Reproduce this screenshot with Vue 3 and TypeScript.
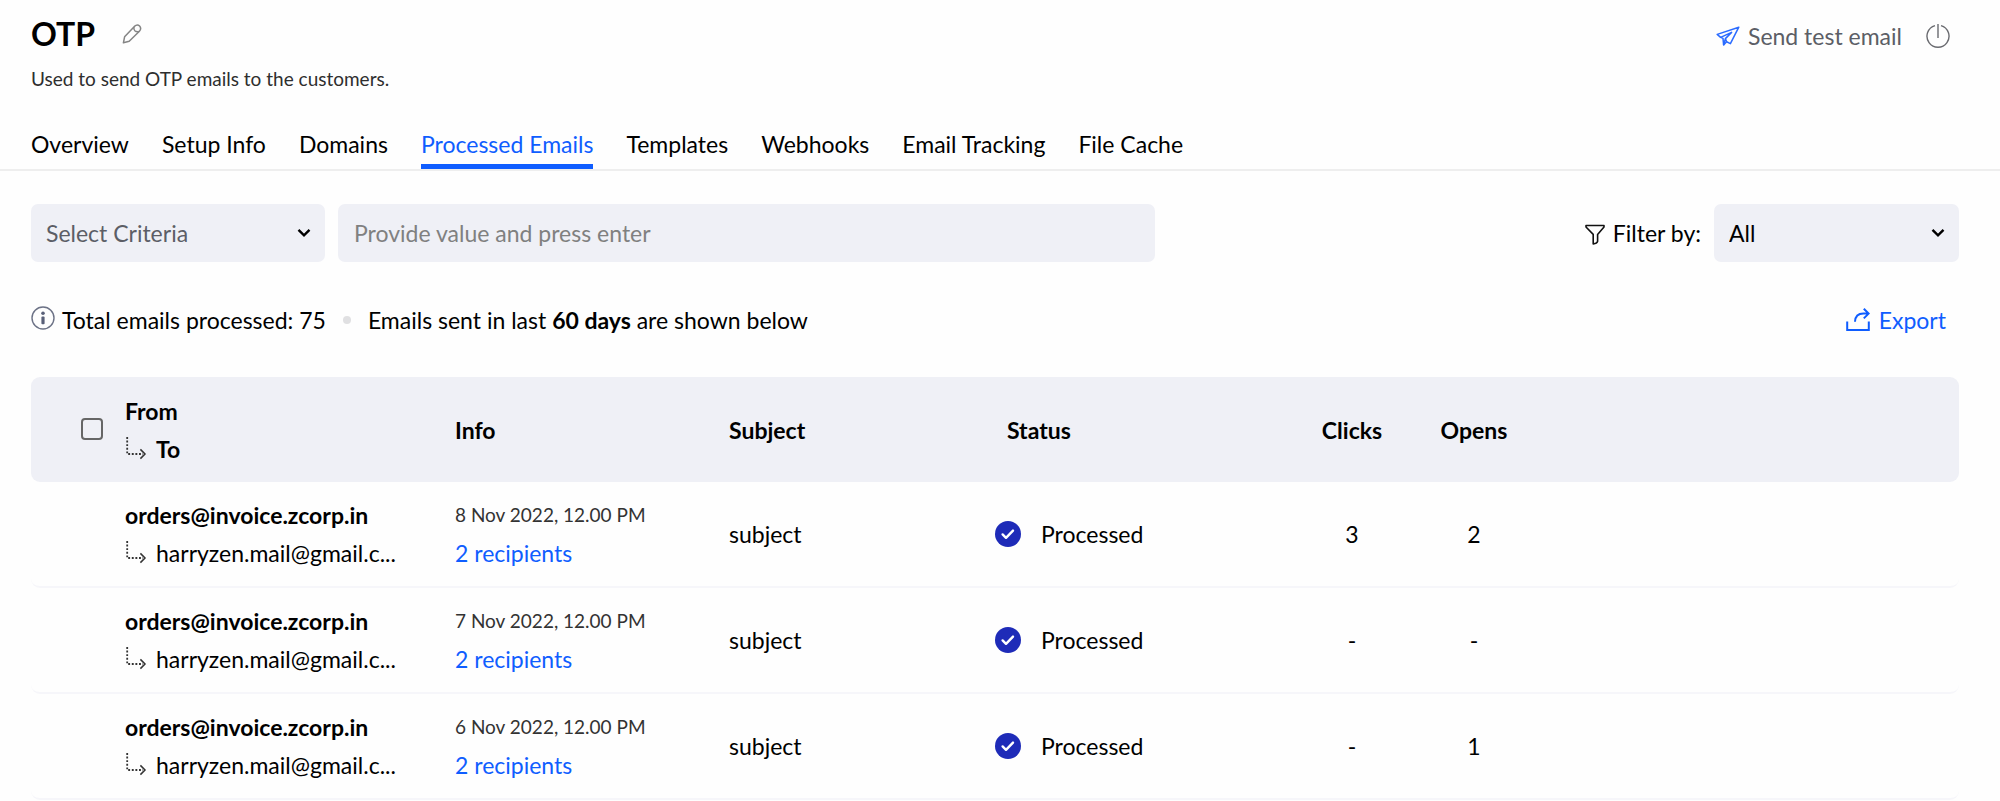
<script setup lang="ts">
import { ref } from 'vue'

interface MailRow {
  from: string
  to: string
  date: string
  recipients: string
  subject: string
  status: string
  clicks: string
  opens: string
}

const tabs: string[] = [
  'Overview',
  'Setup Info',
  'Domains',
  'Processed Emails',
  'Templates',
  'Webhooks',
  'Email Tracking',
  'File Cache',
]
const activeTab = ref('Processed Emails')
const criteria = ref('Select Criteria')
const query = ref('')
const filter = ref('All')
const allSelected = ref(false)

const makeRow = (date: string, clicks: string, opens: string): MailRow => ({
  from: 'orders@invoice.zcorp.in',
  to: 'harryzen.mail@gmail.c...',
  date,
  recipients: '2 recipients',
  subject: 'subject',
  status: 'Processed',
  clicks,
  opens,
})

const rows: MailRow[] = [
  makeRow('8 Nov 2022, 12.00 PM', '3', '2'),
  makeRow('7 Nov 2022, 12.00 PM', '-', '-'),
  makeRow('6 Nov 2022, 12.00 PM', '-', '1'),
]
</script>

<template>
  <main class="page">
    <header class="head">
      <div>
        <div class="title-row">
          <h1>OTP</h1>
          <button type="button" class="icon-btn" aria-label="Edit name">
            <svg viewBox="0 0 20 20" width="20" height="20" fill="none" stroke="#858585" stroke-width="1.5" stroke-linejoin="round">
              <path d="M1.4 18.8 L2.6 12.8 L12.4 2.4 Q15.2 0 17.6 2 Q19.8 4.4 17.4 7.2 L7.2 17.2 Z" />
              <path d="M12 3 Q11.4 5.4 12.8 6.8 Q14.4 8.2 17 7.6" />
            </svg>
          </button>
        </div>
        <p class="desc">Used to send OTP emails to the customers.</p>
      </div>
      <div class="actions">
        <button type="button" class="send">
          <svg viewBox="0 0 24 20" width="24" height="20" fill="none" stroke="#2a6bff" stroke-width="1.5" stroke-linejoin="round">
            <path d="M22.8 1.2 L1.2 8.4 L4.6 11.4 L7 12.4 L7.6 19 L10.6 15.8 L14.4 17.6 Z" />
            <path d="M4.6 11.4 L15.6 6.4 L9.4 12.6 L10.6 15.8 M9.4 12.6 L7.6 19" />
          </svg>
          Send test email
        </button>
        <button type="button" class="icon-btn" aria-label="Power">
          <svg viewBox="0 0 24 24" width="24" height="24" fill="none" stroke="#6a6b70" stroke-width="1.4">
            <path d="M9 1.6 A11 11 0 1 0 15 1.6 M12 0 V14" />
          </svg>
        </button>
      </div>
    </header>

    <nav class="tabs">
      <a v-for="tab in tabs" :key="tab" href="#" :class="{ active: tab === activeTab }" @click.prevent="activeTab = tab">{{ tab }}</a>
    </nav>

    <section class="filters">
      <div class="select criteria">
        <select v-model="criteria" aria-label="Criteria">
          <option>Select Criteria</option>
        </select>
        <svg class="chevron" viewBox="0 0 14 10" width="14" height="10" fill="none" stroke="#000" stroke-width="2.4"><path d="M1.5 1.8 L7 7.4 L12.5 1.8" /></svg>
      </div>
      <input v-model="query" class="search" type="text" aria-label="Search value" placeholder="Provide value and press enter" />
      <label class="filter-label" for="filter-by">
        <svg viewBox="0 -3 20 24" width="20" height="24" fill="none" stroke="#111" stroke-width="1.6" stroke-linejoin="round">
          <path d="M1 1.5 H19 V3 L12.6 10.4 V17.4 Q12 19.6 8.2 20 V10.4 L1 3 Z" />
        </svg>
        Filter by:
      </label>
      <div class="select by">
        <select id="filter-by" v-model="filter">
          <option>All</option>
        </select>
        <svg class="chevron" viewBox="0 0 14 10" width="14" height="10" fill="none" stroke="#000" stroke-width="2.4"><path d="M1.5 1.8 L7 7.4 L12.5 1.8" /></svg>
      </div>
    </section>

    <section class="summary">
      <svg viewBox="0 0 24 28" width="24" height="28" fill="none">
        <circle cx="12" cy="12" r="11" stroke="#6c7286" stroke-width="1.4" />
        <circle cx="12" cy="7.3" r="1.8" fill="#596078" />
        <rect x="10.4" y="10.4" width="3.2" height="7.8" rx="1" fill="#596078" />
      </svg>
      <span class="total">Total emails processed: 75</span>
      <i class="dot"></i>
      <span>Emails sent in last <b>60 days</b> are shown below</span>
      <button type="button" class="export">
        <svg viewBox="0 0 24 24" width="24" height="24" fill="none" stroke="#0f5dff" stroke-width="2">
          <path d="M1.2 13.6 V22 H22.8 V13.6" />
          <path d="M9 13.8 Q9.4 5.6 17.4 5.6 H22.4 M17.8 0.8 L22.6 5.6 L17.8 10.4" />
        </svg>
        Export
      </button>
    </section>

    <table>
      <colgroup>
        <col class="c-check" /><col class="c-from" /><col class="c-info" /><col class="c-subject" />
        <col class="c-status" /><col class="c-num" /><col class="c-num" /><col />
      </colgroup>
      <thead>
        <tr>
          <th class="check"><input v-model="allSelected" type="checkbox" aria-label="Select all emails" /></th>
          <th>
            <div class="line">From</div>
            <div class="line to">
              <svg class="branch" viewBox="0 0 22 24" width="22" height="24" fill="none" stroke="#333" stroke-width="1.8">
                <path d="M2.2 0 V17 H18" stroke-dasharray="1.9 1.7" /><path d="M15.4 12.4 L20 17 L15.4 21.6" stroke-width="1.5" />
              </svg>
              <span>To</span>
            </div>
          </th>
          <th>Info</th>
          <th>Subject</th>
          <th class="status-head">Status</th>
          <th class="num">Clicks</th>
          <th class="num">Opens</th>
          <th></th>
        </tr>
      </thead>
      <tbody>
        <tr v-for="row in rows" :key="row.date">
          <td></td>
          <td>
            <div class="line from">{{ row.from }}</div>
            <div class="line to">
              <svg class="branch" viewBox="0 0 22 24" width="22" height="24" fill="none" stroke="#333" stroke-width="1.8">
                <path d="M2.2 0 V17 H18" stroke-dasharray="1.9 1.7" /><path d="M15.4 12.4 L20 17 L15.4 21.6" stroke-width="1.5" />
              </svg>
              <span>{{ row.to }}</span>
            </div>
          </td>
          <td>
            <div class="line date">{{ row.date }}</div>
            <div class="line"><a href="#" @click.prevent>{{ row.recipients }}</a></div>
          </td>
          <td>{{ row.subject }}</td>
          <td>
            <div class="status">
              <svg viewBox="0 0 26 26" width="26" height="26" fill="none">
                <circle cx="13" cy="13" r="13" fill="#1e2bb8" />
                <path d="M7.6 13.4 L11 16.8 L18 9.6" stroke="#fff" stroke-width="2.4" stroke-linecap="round" stroke-linejoin="round" />
              </svg>
              {{ row.status }}
            </div>
          </td>
          <td class="num">{{ row.clicks }}</td>
          <td class="num">{{ row.opens }}</td>
          <td></td>
        </tr>
      </tbody>
    </table>
  </main>
</template>

<style>
body {
  margin: 0;
  background: #fefefe;
}
</style>

<style scoped>
.page {
  color: #000;
  font-family: Lato, 'Liberation Sans', sans-serif;
  font-size: 23px;
  line-height: 28px;
}
button,
select,
input {
  font: inherit;
  color: inherit;
}
button {
  display: flex;
  align-items: center;
  padding: 0;
  border: 0;
  background: none;
  cursor: pointer;
}
a {
  color: #0f5dff;
  text-decoration: none;
}
.head {
  display: flex;
  justify-content: space-between;
  padding: 14px 50px 0 31px;
}
.title-row {
  display: flex;
  align-items: center;
  gap: 27px;
}
h1 {
  margin: 0;
  font-size: 32px;
  line-height: 40px;
  font-weight: 700;
}
.desc {
  margin: 11px 0 0;
  font-size: 19px;
  color: #2e2e2e;
}
.actions {
  display: flex;
  align-items: center;
  gap: 24px;
  height: 44px;
}
.send {
  gap: 8px;
  color: #5c5e66;
}
.tabs {
  display: flex;
  gap: 33px;
  margin-top: 37px;
  padding: 0 31px;
  border-bottom: 2px solid #eee;
}
.tabs a {
  padding-bottom: 6px;
  border-bottom: 5px solid transparent;
  color: #000;
  white-space: nowrap;
}
.tabs a.active {
  color: #0f5dff;
  border-color: #0f5dff;
}
.filters {
  display: flex;
  align-items: center;
  padding: 33px 41px 0 31px;
}
.select {
  position: relative;
}
.select select,
.search {
  display: block;
  box-sizing: border-box;
  width: 100%;
  height: 58px;
  padding: 0 15px;
  border: 0;
  border-radius: 7px;
  background: #eff0f6;
  appearance: none;
}
.criteria {
  width: 294px;
  color: #5c5e66;
}
.by {
  width: 245px;
}
.chevron {
  position: absolute;
  top: 24px;
  right: 14px;
  pointer-events: none;
}
.search {
  flex: 0 1 817px;
  margin: 0 auto 0 13px;
  padding: 0 16px;
}
.search::placeholder {
  color: #808080;
}
.filter-label {
  display: flex;
  align-items: center;
  gap: 8px;
  margin-right: 13px;
}
.summary {
  display: flex;
  align-items: center;
  margin-top: 44px;
  padding: 0 54px 0 31px;
}
.total {
  margin-left: 7px;
}
.dot {
  width: 8px;
  height: 8px;
  margin: 0 17px;
  border-radius: 50%;
  background: #e0e0e2;
}
.export {
  gap: 9px;
  margin-left: auto;
  color: #0f5dff;
}
table {
  width: calc(100% - 72px);
  margin: 43px 41px 0 31px;
  border-spacing: 0;
  table-layout: fixed;
}
.c-check { width: 94px; }
.c-from { width: 330px; }
.c-info { width: 274px; }
.c-subject { width: 266px; }
.c-status { width: 296px; }
.c-num { width: 122px; }
th,
td {
  padding: 0;
  text-align: left;
  vertical-align: middle;
}
th {
  height: 105px;
  background: #eff0f6;
  font-weight: 700;
}
th:first-child {
  border-radius: 9px 0 0 9px;
}
th:last-child {
  border-radius: 0 9px 9px 0;
}
td {
  height: 104px;
  border-bottom: 2px solid #f6f6fa;
}
td:first-child {
  border-bottom-left-radius: 9px;
}
td:last-child {
  border-bottom-right-radius: 9px;
}
.check input {
  display: block;
  box-sizing: border-box;
  width: 22px;
  height: 22px;
  margin: 0 0 2px 50px;
  border: 2px solid #666;
  border-radius: 4px;
  appearance: none;
}
.check input:checked {
  background: #0f5dff;
}
.line {
  line-height: 38px;
}
.from {
  font-weight: 700;
}
.to {
  display: flex;
  align-items: center;
  gap: 9px;
}
.branch {
  flex: none;
}
.date {
  font-size: 19px;
  color: #333;
}
.status-head {
  padding-left: 12px;
}
.status {
  display: flex;
  align-items: center;
  gap: 20px;
}
.num {
  text-align: center;
}
</style>
